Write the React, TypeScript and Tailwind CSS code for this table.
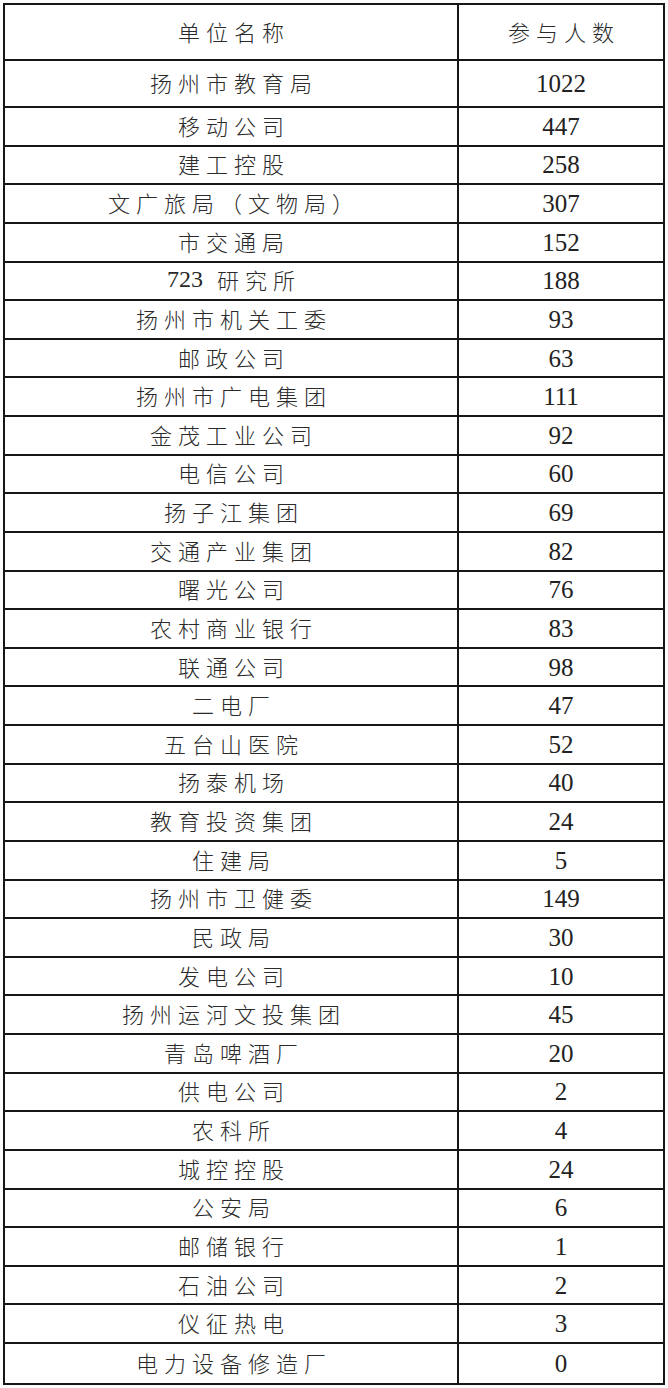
import type {ReactNode} from 'react';

const rows: [ReactNode, string][] = [
    ['移动公司', '447'],
    ['建工控股', '258'],
    ['文广旅局（文物局）', '307'],
    ['市交通局', '152'],
    [
        <>
            <span className="font-['Liberation_Serif',serif] text-[24px] tracking-normal mr-[14px]">723</span>研究所
        </>,
        '188',
    ],
    ['扬州市机关工委', '93'],
    ['邮政公司', '63'],
    ['扬州市广电集团', '111'],
    ['金茂工业公司', '92'],
    ['电信公司', '60'],
    ['扬子江集团', '69'],
    ['交通产业集团', '82'],
    ['曙光公司', '76'],
    ['农村商业银行', '83'],
    ['联通公司', '98'],
    ['二电厂', '47'],
    ['五台山医院', '52'],
    ['扬泰机场', '40'],
    ['教育投资集团', '24'],
    ['住建局', '5'],
    ['扬州市卫健委', '149'],
    ['民政局', '30'],
    ['发电公司', '10'],
    ['扬州运河文投集团', '45'],
    ['青岛啤酒厂', '20'],
    ['供电公司', '2'],
    ['农科所', '4'],
    ['城控控股', '24'],
    ['公安局', '6'],
    ['邮储银行', '1'],
    ['石油公司', '2'],
    ['仪征热电', '3'],
    ['电力设备修造厂', '0'],
];

const cjk = "font-['Noto_Sans_CJK_SC',sans-serif] font-light text-[22px] leading-none tracking-[6px] pl-[6px] pb-[3px] text-[#2a2a2a]";
const num = "font-['Liberation_Serif',serif] text-[25px] leading-none text-[#222]";

const Row = ({name, count, className}: {name: ReactNode; count: string; className: string}) => (
    <div className={`flex min-h-0 overflow-hidden ${className}`}>
        <div className={`w-[454px] shrink-0 border-r-2 border-[#161616] flex items-center justify-center ${cjk}`}>
            {name}
        </div>
        <div className={`flex-1 flex items-center justify-center ${num}`}>{count}</div>
    </div>
);

export default function App() {
    return (
        <div className="w-[668px] h-[1388px] bg-[#fdfdfd] pt-[3px] pl-[3px]">
            <div className="w-[662px] h-[1382px] border-2 border-[#161616] flex flex-col bg-white overflow-hidden">
                {/* header */}
                <div className="flex h-[56px] border-b-2 border-[#161616] shrink-0">
                    <div className={`w-[454px] shrink-0 border-r-2 border-[#161616] flex items-center justify-center ${cjk}`}>
                        单位名称
                    </div>
                    <div className={`flex-1 flex items-center justify-center ${cjk}`}>参与人数</div>
                </div>
                <Row name="扬州市教育局" count="1022" className="h-[47px] shrink-0 border-b-2 border-[#161616]" />
                {rows.map(([name, count], i) => (
                    <Row
                        key={i}
                        name={name}
                        count={count}
                        className={`h-[38.64px] shrink-0 ${i < rows.length - 1 ? 'border-b-2 border-[#161616]' : ''}`}
                    />
                ))}
            </div>
        </div>
    );
}
